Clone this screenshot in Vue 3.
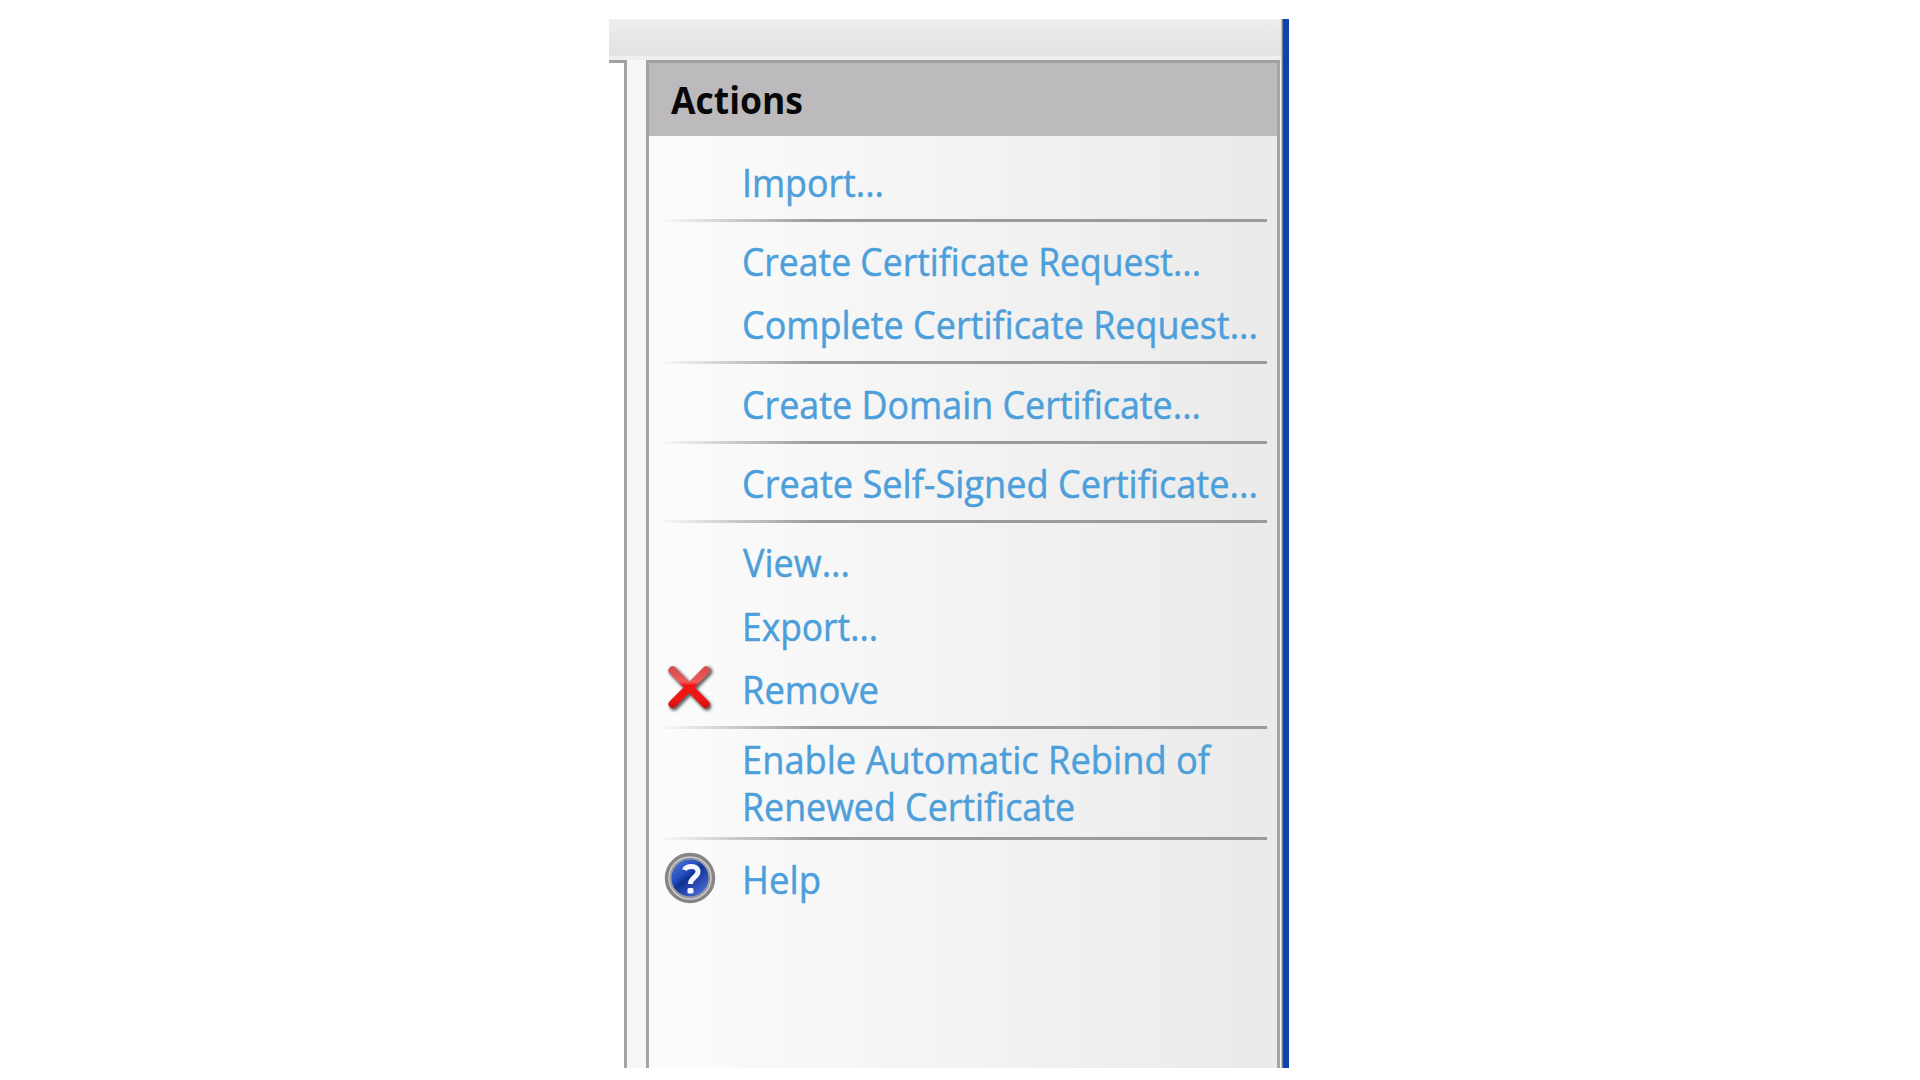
<script setup>
const groups = [
  [{ lines: [{ text: 'Import...', width: 142 }] }],
  [
    { lines: [{ text: 'Create Certificate Request...', width: 459 }] },
    { lines: [{ text: 'Complete Certificate Request...', width: 516 }] },
  ],
  [{ lines: [{ text: 'Create Domain Certificate...', width: 459 }] }],
  [{ lines: [{ text: 'Create Self-Signed Certificate...', width: 516 }] }],
  [
    { lines: [{ text: 'View...', width: 107, x: 2 }] },
    { lines: [{ text: 'Export...', width: 136 }] },
    { lines: [{ text: 'Remove', width: 137 }], icon: 'remove' },
  ],
  [
    {
      lines: [
        { text: 'Enable Automatic Rebind of', width: 468 },
        { text: 'Renewed Certificate', width: 333 },
      ],
    },
  ],
  [{ lines: [{ text: 'Help', width: 79 }], icon: 'help' }],
]
</script>

<template>
  <main class="page">
    <div class="window">
      <div class="toolbar"></div>
      <div class="content">
        <div class="list-edge"></div>
        <div class="splitter"></div>
        <aside class="actions">
          <header class="title">
            <svg width="200" height="73">
              <text x="22" y="51" textLength="132" lengthAdjust="spacingAndGlyphs">Actions</text>
            </svg>
          </header>
          <nav class="menu">
            <section v-for="(group, g) in groups" :key="g" class="group">
              <a v-for="item in group" :key="item.lines[0].text" class="item" :class="{ double: item.lines.length > 1 }">
                <span class="icon">
                  <svg v-if="item.icon === 'remove'" width="56" height="56" viewBox="0 0 56 56">
                    <defs>
                      <linearGradient id="red" x1="0" y1="6" x2="0" y2="48" gradientUnits="userSpaceOnUse">
                        <stop offset="0" stop-color="#d8494b" />
                        <stop offset=".38" stop-color="#ee5b5b" />
                        <stop offset=".46" stop-color="#ee1512" />
                        <stop offset=".8" stop-color="#ef1714" />
                        <stop offset="1" stop-color="#c90d0d" />
                      </linearGradient>
                      <filter id="soft" x="-20%" y="-20%" width="140%" height="140%">
                        <feGaussianBlur stdDeviation="1.5" />
                      </filter>
                    </defs>
                    <path d="M11.500 11.500 L45 46 M46 11.500 L12 46" stroke="#444" stroke-width="9" stroke-linecap="round" opacity=".85" filter="url(#soft)" />
                    <path d="M10.5 10.500 L43.500 44 M44 10.500 L10.5 44" stroke="url(#red)" stroke-width="8" stroke-linecap="round" />
                  </svg>
                  <svg v-if="item.icon === 'help'" width="56" height="56" viewBox="0 0 56 56">
                    <defs>
                      <linearGradient id="blue" x1="0" y1="0" x2=".8" y2="1">
                        <stop offset="0" stop-color="#5b7de0" />
                        <stop offset=".4" stop-color="#2350bd" />
                        <stop offset=".52" stop-color="#0e3295" />
                        <stop offset="1" stop-color="#5270dc" />
                      </linearGradient>
                    </defs>
                    <circle cx="28" cy="28" r="23.5" fill="#d2d2d2" stroke="#858585" stroke-width="3.500" />
                    <circle cx="28" cy="28" r="19.500" fill="url(#blue)" stroke="#98999f" stroke-width="2" />
                    <path d="M22.500 20 C24 15.500 36 14.500 36 21.500 C36 27 28.500 27.500 28.500 34" fill="none" stroke="#f5f7ff" stroke-width="5" />
                    <rect x="25.500" y="38" width="6" height="5.500" rx="1.500" fill="#f5f7ff" />
                  </svg>
                </span>
                <svg class="label" width="530" :height="item.lines.length > 1 ? 95 : 63.5">
                  <text
                    v-for="(line, i) in item.lines"
                    :key="line.text"
                    :x="line.x ?? 1"
                    :y="item.lines.length > 1 ? 38.5 + i * 47.7 : 48.3"
                    :textLength="line.width"
                    lengthAdjust="spacingAndGlyphs"
                  >{{ line.text }}</text>
                </svg>
              </a>
              <div v-if="g < groups.length - 1" class="rule"></div>
            </section>
          </nav>
        </aside>
      </div>
    </div>
  </main>
</template>

<style>
body { margin: 0; background: #fff; }
</style>

<style scoped>
.page {
  box-sizing: border-box;
  width: 1920px;
  height: 1080px;
  padding: 19px 0 0 608.5px;
  overflow: hidden;
  background: #fff;
  font-family: "Open Sans", "Noto Sans", sans-serif;
}
.window {
  box-sizing: border-box;
  display: flex;
  flex-direction: column;
  width: 680.5px;
  height: 1048.500px;
  border-right: 6px solid #0d43aa;
  background: #f6f6f6;
  box-shadow: inset -1.500px 0 #7c8593;
}
.toolbar {
  height: 37px;
  margin-right: 2px;
  border-bottom: 4px solid #f0eeef;
  background: linear-gradient(#eee, #e3e1e2);
}
.content {
  display: flex;
  flex: 1;
  min-height: 0;
}
.list-edge {
  box-sizing: border-box;
  width: 18.5px;
  border-top: 3px solid #a0a0a0;
  border-right: 3px solid #a4a4a4;
  background: #fff;
}
.splitter { width: 19px; background: #f6f6f6; }
.actions {
  box-sizing: border-box;
  width: 633.500px;
  border: 3px solid #a4a4a4;
  border-top-color: #a0a0a0;
  border-bottom: 0;
  background: linear-gradient(90deg, #fcfcfc, #f3f3f3 50%, #eaeaea);
}
.title {
  height: 73px;
  background: #bdbabd;
}
.title svg, .label { display: block; overflow: visible; }
.title text {
  font-size: 38px;
  font-weight: 700;
  fill: #080808;
}
.menu { padding-top: 12.5px; }
.item { display: flex; height: 63.500px; }
.double { height: 95px; }
.icon {
  box-sizing: border-box;
  display: flex;
  align-items: center;
  width: 92px;
  padding-left: 13px;
}
.label { flex: none; }
.label text {
  font-size: 39px;
  fill: #4c9fda;
  stroke: #4c9fda;
  stroke-width: 0.5px;
}
.rule {
  height: 3px;
  margin: 6.500px 10px 6.300px 8px;
  background: linear-gradient(90deg, rgba(155, 155, 155, 0), #9b9b9b 26%);
}
</style>
